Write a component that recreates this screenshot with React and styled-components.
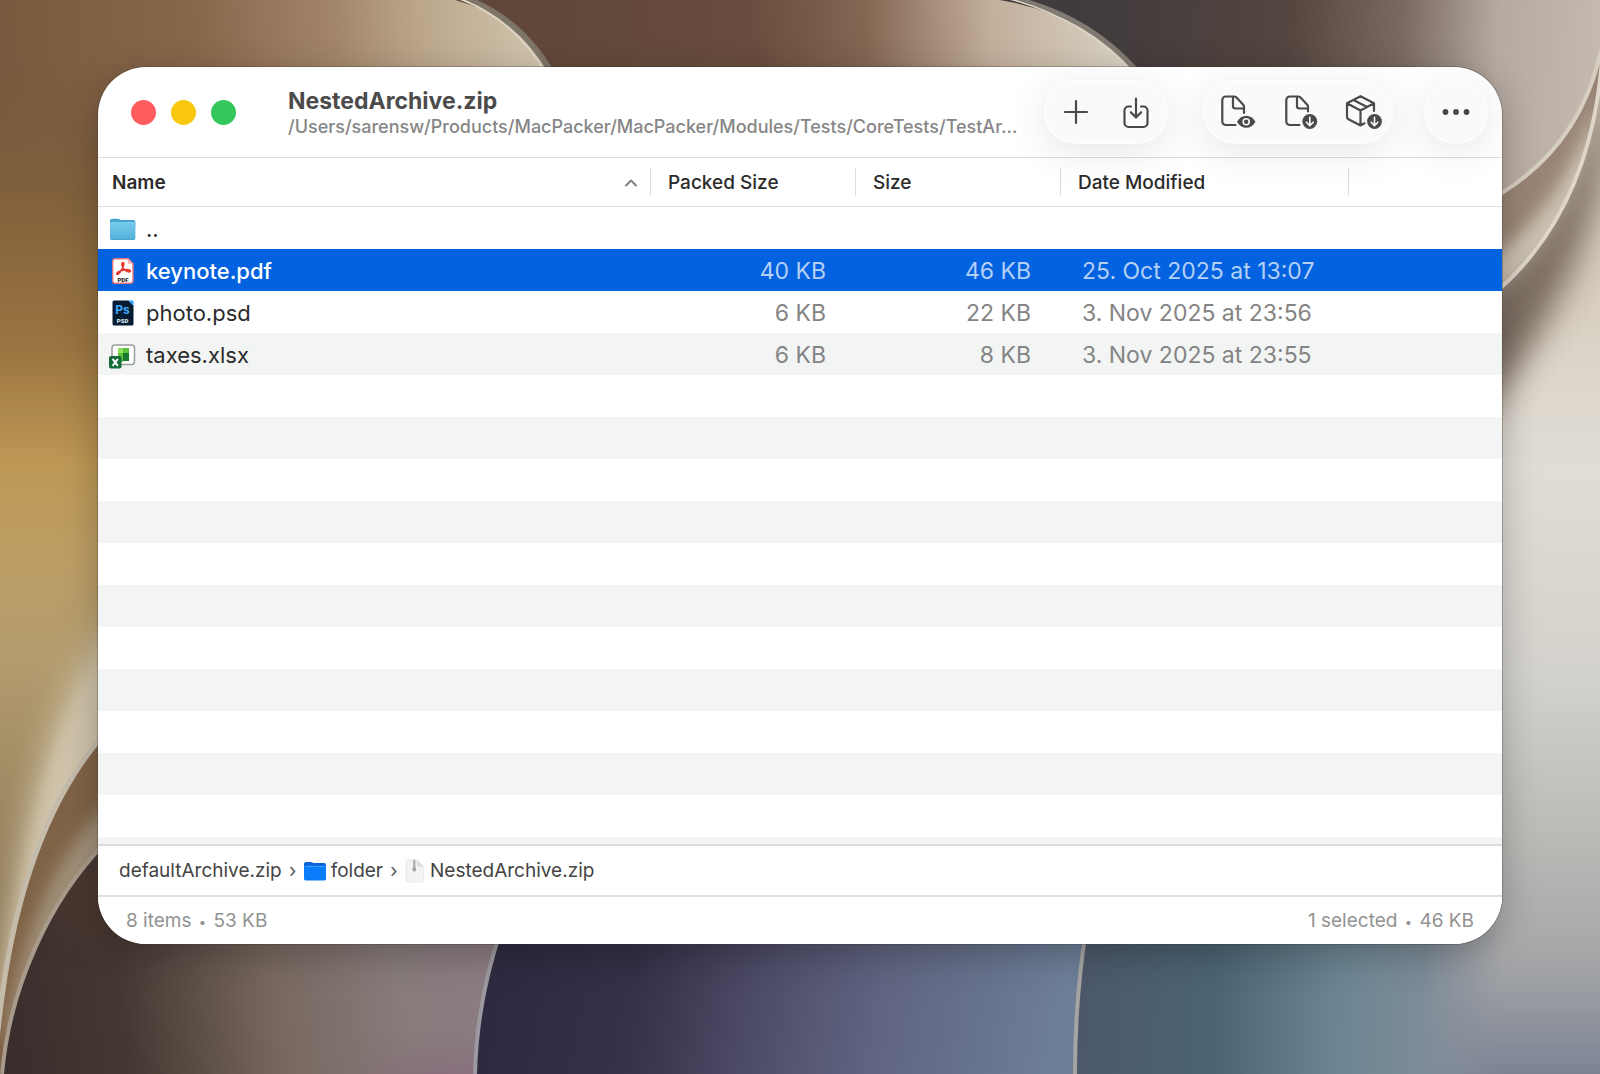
import React, { useState } from "react";
import styled, { createGlobalStyle } from "styled-components";

const GlobalStyle = createGlobalStyle`
  *, *::before, *::after { box-sizing: border-box; }
  body {
    margin: 0;
    background: #4a3f39;
    font-family: Inter, "Liberation Sans", sans-serif;
    -webkit-font-smoothing: antialiased;
  }
`;

const Desktop = styled.div`
  position: relative;
  display: flex;
  min-height: 100vh;
  padding: 67px 98px 130px;
  overflow: hidden;
`;

const WallpaperArt = styled.svg`
  position: absolute;
  inset: 0;
  width: 100%;
  height: 100%;
`;

const Window = styled.main`
  position: relative;
  display: flex;
  flex: 1;
  flex-direction: column;
  min-width: 0;
  overflow: hidden;
  border-radius: 48px;
  background: #fff;
`;

const WindowShadow = styled.div`
  position: relative;
  display: flex;
  flex: 1;
  min-width: 0;
  border-radius: 48px;
  box-shadow: 0 0 0 1px rgba(60, 54, 50, 0.3), 0 10px 36px rgba(0, 0, 0, 0.25);
`;

const TitleBar = styled.header`
  position: relative;
  z-index: 1;
  display: flex;
  align-items: center;
  height: 91px;
  padding: 0 14px 0 33px;
  border-bottom: 1px solid #dcdcdc;
`;

const TrafficLights = styled.div`
  display: flex;
  gap: 15px;
`;

const Light = styled.button`
  width: 25px;
  height: 25px;
  padding: 0;
  border: 0;
  border-radius: 50%;
  background: ${(p) => p.$color};
`;

const TitleBlock = styled.div`
  flex: 1;
  min-width: 0;
  margin: 0 17px 0 52px;
  padding-top: 4px;
`;

const Title = styled.h1`
  margin: 0;
  color: #4b4b4b;
  font-size: 23px;
  font-weight: 700;
  line-height: 26px;
`;

const FilePath = styled.p`
  margin: 0;
  overflow: hidden;
  color: #868686;
  font-size: 18px;
  font-weight: 500;
  line-height: 26px;
  white-space: nowrap;
`;

const ToolGroup = styled.div`
  display: flex;
  gap: ${(p) => p.$gap || 0}px;
  margin-left: ${(p) => p.$before || 0}px;
  padding: 2px;
  border-radius: 32px;
  background: #fafafa;
  box-shadow: inset 0 0 2px 1px #fff, 0 8px 40px rgba(0, 0, 0, 0.1);
`;

const ToolButton = styled.button`
  display: flex;
  align-items: center;
  justify-content: center;
  width: 60px;
  height: 60px;
  padding: 0;
  border: 0;
  border-radius: 50%;
  background: transparent;
  color: #4a4a4a;
`;

const LineIcon = styled.svg`
  flex: none;
  fill: none;
  stroke: ${(p) => p.$color || "currentColor"};
  stroke-width: 2.2;
  stroke-linecap: round;
  stroke-linejoin: round;
`;

const FileArea = styled.section`
  flex: 1;
  overflow: hidden;
`;

const Stripes = styled.div`
  height: 100%;
  background: repeating-linear-gradient(#fff 0 42px, #f3f5f4 42px 84px) 0 49px no-repeat;
`;

const FileTable = styled.table`
  width: 100%;
  border-spacing: 0;
  table-layout: fixed;
`;

const Column = styled.col`
  width: ${(p) => p.$width}px;
`;

const HeadCell = styled.th`
  height: 49px;
  padding: 0;
  border-bottom: 1px solid #dfdfdf;
`;

const SortButton = styled.button`
  display: flex;
  align-items: center;
  justify-content: space-between;
  width: 100%;
  height: 28px;
  padding: 2px 12px 0 ${(p) => (p.$lead ? 14 : 17)}px;
  border: 0;
  border-right: 1px solid #dcdcdc;
  background: transparent;
  color: #2b2b2b;
  font: ${(p) => (p.$lead ? 600 : 500)} 19px/26px Inter, "Liberation Sans", sans-serif;
`;

const Row = styled.tr`
  height: 42px;
  background: ${(p) => (p.$selected ? "#0262df" : "transparent")};
  color: ${(p) => (p.$selected ? "#b4d0f7" : "#848484")};
  font-size: 23px;
  line-height: 28px;
`;

const NameCell = styled.td`
  padding: 0 0 0 11px;
  color: ${(p) => (p.$selected ? "#fff" : "#2b2b2b")};
  font-size: 22px;
  font-weight: ${(p) => (p.$selected ? 500 : 400)};
`;

const FileName = styled.div`
  display: flex;
  align-items: center;
  gap: 9px;
  padding-top: 1px;
`;

const SizeCell = styled.td`
  padding: 2px 30px 0 0;
  text-align: right;
`;

const DateCell = styled.td`
  padding: 2px 0 0 21px;
  white-space: nowrap;
`;

const PathBar = styled.nav`
  height: 51px;
  padding: 0 21px;
  border-top: 2px solid #dbdbdb;
  background: #fff;
`;

const Crumbs = styled.ol`
  display: flex;
  align-items: center;
  height: 100%;
  margin: 0;
  padding: 0;
  list-style: none;
`;

const Crumb = styled.li`
  display: flex;
  align-items: center;
`;

const CrumbLink = styled.a`
  display: flex;
  align-items: center;
  gap: 5px;
  color: #444;
  font-size: 19px;
  line-height: 28px;
  text-decoration: none;
`;

const Divider = styled.span`
  width: 22px;
  color: #555;
  font-size: 19px;
  line-height: 28px;
  text-align: center;
`;

const StatusBar = styled.footer`
  display: flex;
  align-items: center;
  justify-content: space-between;
  height: 49px;
  padding: 2px 28px 0;
  border-top: 2px solid #e0e0e0;
  background: #fff;
  color: #929292;
  font-size: 19px;
  line-height: 28px;
`;

const Bullet = styled.span`
  margin: 0 2px;
  font-size: 13px;
`;

function Wallpaper() {
  return (
    <WallpaperArt viewBox="0 0 1600 1074" preserveAspectRatio="none" aria-hidden="true">
      <defs>
        <linearGradient id="lobeA" gradientUnits="userSpaceOnUse" x1="0" y1="40" x2="550" y2="0">
          <stop offset="0" stopColor="#795a3e" />
          <stop offset=".35" stopColor="#87674a" />
          <stop offset=".6" stopColor="#a1846a" />
          <stop offset=".76" stopColor="#bba68b" />
          <stop offset="1" stopColor="#d3c7b1" />
        </linearGradient>
        <linearGradient id="lobeB" gradientUnits="userSpaceOnUse" x1="500" y1="40" x2="1130" y2="0">
          <stop offset="0" stopColor="#5f4638" />
          <stop offset=".4" stopColor="#694d3e" />
          <stop offset=".58" stopColor="#836753" />
          <stop offset=".78" stopColor="#c3af9c" />
          <stop offset="1" stopColor="#d9d4c5" />
        </linearGradient>
        <linearGradient id="lobeC" gradientUnits="userSpaceOnUse" x1="1080" y1="40" x2="1600" y2="70">
          <stop offset="0" stopColor="#403b3d" />
          <stop offset=".4" stopColor="#54453f" />
          <stop offset=".62" stopColor="#7a6a62" />
          <stop offset=".8" stopColor="#b5aaa1" />
          <stop offset="1" stopColor="#c4bab0" />
        </linearGradient>
        <linearGradient id="left" gradientUnits="userSpaceOnUse" x1="0" y1="60" x2="0" y2="900">
          <stop offset="0" stopColor="#7a5a3e" stopOpacity="0" />
          <stop offset=".15" stopColor="#80603c" />
          <stop offset=".34" stopColor="#9a7440" />
          <stop offset=".48" stopColor="#bd9855" />
          <stop offset=".6" stopColor="#bd9e66" />
          <stop offset=".72" stopColor="#b29b6e" />
          <stop offset="1" stopColor="#8f7a58" />
        </linearGradient>
        <linearGradient id="right" gradientUnits="userSpaceOnUse" x1="0" y1="280" x2="0" y2="1074">
          <stop offset="0" stopColor="#d6ccbd" />
          <stop offset=".12" stopColor="#ddd6cb" />
          <stop offset=".24" stopColor="#e0ddd6" />
          <stop offset=".5" stopColor="#d3d1cb" />
          <stop offset=".7" stopColor="#bcbab7" />
          <stop offset=".85" stopColor="#a6a7a8" />
          <stop offset="1" stopColor="#7c8494" />
        </linearGradient>
        <linearGradient id="floor1" gradientUnits="userSpaceOnUse" x1="0" y1="1050" x2="500" y2="980">
          <stop offset="0" stopColor="#382d2c" />
          <stop offset=".25" stopColor="#443832" />
          <stop offset=".55" stopColor="#77685f" />
          <stop offset=".8" stopColor="#877b7b" />
          <stop offset="1" stopColor="#8b7c83" />
        </linearGradient>
        <linearGradient id="floor2" gradientUnits="userSpaceOnUse" x1="480" y1="980" x2="1080" y2="1080">
          <stop offset="0" stopColor="#2e2940" />
          <stop offset=".25" stopColor="#363048" />
          <stop offset=".48" stopColor="#504f6b" />
          <stop offset=".66" stopColor="#606581" />
          <stop offset=".95" stopColor="#6d7e97" />
        </linearGradient>
        <linearGradient id="floor3" gradientUnits="userSpaceOnUse" x1="1080" y1="990" x2="1600" y2="1010">
          <stop offset="0" stopColor="#4c586a" />
          <stop offset=".26" stopColor="#4b6473" />
          <stop offset=".5" stopColor="#6c8593" />
          <stop offset=".66" stopColor="#7d8c98" />
          <stop offset=".81" stopColor="#8b909c" stopOpacity="0" />
        </linearGradient>
        <filter id="soft" x="-50%" y="-50%" width="200%" height="200%">
          <feGaussianBlur stdDeviation="16" />
        </filter>
        <filter id="softer" x="-50%" y="-50%" width="200%" height="200%">
          <feGaussianBlur stdDeviation="8" />
        </filter>
        <clipPath id="floorClip">
          <path d="M0 1074C10 1000 50 900 104 842V700H500L500 944Q478 1000 474 1074Z" />
        </clipPath>
        <clipPath id="foldClip">
          <path d="M1490 297Q1590 215 1602 60V700H1490Z" />
        </clipPath>
        <clipPath id="midFoldClip">
          <path d="M1490 200Q1580 150 1601 50L1602 60Q1590 215 1490 297Z" />
        </clipPath>
        <clipPath id="ribbonClip">
          <path d="M104 736C50 800 12 900 0 1040V1074H104Z" />
        </clipPath>
        <clipPath id="outerRibbonClip">
          <path d="M0 500H104V736C50 800 12 900 0 1040Z" />
        </clipPath>
      </defs>

      {/* upper lobes, back to front */}
      <rect width="1600" height="400" fill="url(#lobeC)" />
      <path d="M450 0H1000Q1082 14 1136 67V200H450Z" fill="url(#lobeB)" />
      <path d="M1008 -3Q1086 14 1136 70" fill="none" stroke="#807a72" strokeWidth="5" />
      <path d="M1002 -3Q1080 16 1131 70" fill="none" stroke="#dcd7ca" strokeWidth="1.5" />
      <path d="M0 0H455Q520 18 553 70V300H0Z" fill="url(#lobeA)" />
      <path d="M462 -3Q520 18 551 72" fill="none" stroke="#7d7567" strokeWidth="6" />
      <path d="M455 -3Q514 18 545 72" fill="none" stroke="#ddd5c4" strokeWidth="2" />

      {/* left edge */}
      <rect y="60" width="140" height="1014" fill="url(#left)" />
      <g clipPath="url(#outerRibbonClip)">
        <path d="M130 600C70 660 20 780 0 1020L40 1010C60 880 80 790 130 740Z" fill="#cfc3a7" filter="url(#soft)" />
        <path d="M120 640C70 690 36 780 6 1000L30 1010C60 880 80 790 120 720Z" fill="#cfc3aa" filter="url(#softer)" />
      </g>
      <path d="M104 736C50 800 12 900 0 1040V1074H104Z" fill="#7f6347" />
      <g clipPath="url(#ribbonClip)">
        <path d="M112 800C60 850 25 920 4 1040L20 1030C45 930 70 890 112 850Z" fill="#a2917a" filter="url(#softer)" />
      </g>
      <path d="M104 734C50 796 12 890 -2 1030" fill="none" stroke="#c4bbab" strokeWidth="5" />

      {/* lower panels */}
      <path d="M0 1074C10 1000 50 900 104 842H540V1074Z" fill="url(#floor1)" />
      <g clipPath="url(#floorClip)">
        <ellipse cx="110" cy="900" rx="60" ry="40" fill="#51392d" opacity=".5" filter="url(#soft)" />
        <ellipse cx="450" cy="1080" rx="80" ry="24" fill="#87637a" opacity=".5" filter="url(#soft)" />
      </g>
      <path d="M104 844C50 900 10 985 2 1074" fill="none" stroke="#a89b8b" strokeWidth="4" />
      <path d="M502 930Q478 1000 476 1074H1120V930Z" fill="url(#floor2)" />
      <path d="M1490 297Q1590 215 1602 60V1074H1084V400H1490Z" fill="url(#right)" />
      <path d="M1086 930Q1075 1000 1075 1074H1600V930Z" fill="url(#floor3)" />
      <path d="M501 930Q477 1000 475 1074" fill="none" stroke="#9d99a0" strokeWidth="4" />
      <path d="M1086 930Q1075 1000 1075 1074" fill="none" stroke="#a6a4a2" strokeWidth="4" />

      {/* right edge folds */}
      <path d="M1490 200Q1580 150 1601 50L1602 60Q1590 215 1490 297Z" fill="#998575" />
      <g clipPath="url(#midFoldClip)">
        <path d="M1490 260Q1560 210 1598 100L1590 200Q1545 260 1490 300Z" fill="#cbc1b1" filter="url(#softer)" />
      </g>
      <g clipPath="url(#foldClip)">
        <path d="M1470 300Q1580 225 1604 60L1612 120Q1590 290 1470 430Z" fill="#6f6055" opacity=".9" filter="url(#soft)" />
      </g>
      <path d="M1490 200Q1580 150 1601 50" fill="none" stroke="#d6cec0" strokeWidth="4" />
      <path d="M1490 297Q1590 215 1602 60" fill="none" stroke="#ddd6c9" strokeWidth="4" />
    </WallpaperArt>
  );
}

const PlusIcon = () => (
  <LineIcon width="26" height="26" viewBox="0 0 26 26">
    <path d="M13 2v22M2 13h22" />
  </LineIcon>
);

const ImportIcon = () => (
  <LineIcon width="28" height="34" viewBox="0 -2 28 34">
    <path d="M9 9.5H6.5a4 4 0 0 0-4 4V26a4 4 0 0 0 4 4h15a4 4 0 0 0 4-4V13.5a4 4 0 0 0-4-4H19M14 1.500v18.800M8.800 15.200l5.200 5.200 5.200-5.200" />
  </LineIcon>
);

const ArrowBadge = ({ cx }) => (
  <>
    <circle cx={cx} cy="27.5" r="7.4" fill="currentColor" stroke="none" />
    <path d={`M${cx} 23.2v8M${cx - 3.4} 28.2l3.4 3.4 3.4-3.4`} stroke="#fafafa" strokeWidth="1.6" />
  </>
);

const PreviewIcon = () => (
  <LineIcon width="44" height="36" viewBox="0 0 44 36">
    <path d="M22.500 31H12.800a3.500 3.500 0 0 1-3.500-3.500V6a3.500 3.500 0 0 1 3.500-3.500H21c1 0 1.800.3 2.500 1l6.500 7c.7.8 1 1.500 1 2.500v6M20 3v9a2.500 2.500 0 0 0 2.500 2.500H31" />
    <path d="M24 27.700c4.500-8 14-8 18.500 0-4.500 8-14 8-18.500 0z" fill="currentColor" stroke="none" />
    <circle cx="33.200" cy="27.700" r="3" fill="none" stroke="#fafafa" strokeWidth="1.600" />
  </LineIcon>
);

const ExtractFileIcon = () => (
  <LineIcon width="40" height="36" viewBox="0 0 40 36">
    <path d="M21.500 31h-9.700a3.500 3.500 0 0 1-3.500-3.500V6a3.500 3.500 0 0 1 3.500-3.500H20c1 0 1.800.3 2.500 1l6.500 7c.7.8 1 1.500 1 2.500v4.500M19 3v9a2.500 2.500 0 0 0 2.500 2.500H30" />
    <ArrowBadge cx={31.8} />
  </LineIcon>
);

const ExtractAllIcon = () => (
  <LineIcon width="42" height="36" viewBox="-1 0 42 36">
    <path d="M23.500 29.300L19.500 31.500 7.500 25.300Q6 24.500 6 22.800V9.200L19.500 2.200 33 9.200V17M6 9.200L19.500 16.500 33 9.200M19.500 16.500V31M12.500 6L26 13" />
    <ArrowBadge cx={33.5} />
  </LineIcon>
);

const MoreIcon = () => (
  <svg width="28" height="8" viewBox="0 0 28 8" fill="currentColor">
    <circle cx="3.500" cy="4" r="2.900" />
    <circle cx="14" cy="4" r="2.900" />
    <circle cx="24.500" cy="4" r="2.900" />
  </svg>
);

const SortIcon = () => (
  <LineIcon $color="#808080" width="14" height="8" viewBox="0 0 14 8">
    <path d="M2 6.500L7 1.500l5 5" strokeWidth="2" />
  </LineIcon>
);

const SkyFolderIcon = () => (
  <svg width="28" height="28" viewBox="0 0 28 28">
    <defs>
      <linearGradient id="sky" x1="0" y1="0" x2="0" y2="1">
        <stop offset="0" stopColor="#79cbec" />
        <stop offset="1" stopColor="#51b0da" />
      </linearGradient>
    </defs>
    <path d="M1 6a2.200 2.200 0 0 1 2.200-2.200h5.600c1.600 0 2 1.200 3.400 1.200h12a2.200 2.200 0 0 1 2.200 2.200V12H1z" fill="#47a3cf" />
    <rect x="1" y="7" width="25.400" height="18" rx="2" fill="url(#sky)" />
    <path d="M2 24.500h23.400" stroke="#4aa3cc" strokeWidth="1" />
  </svg>
);

const PdfIcon = () => (
  <svg width="28" height="28" viewBox="0 0 28 28">
    <path d="M5.500 1.700H19l5 5V24a2.300 2.300 0 0 1-2.300 2.300H5.500A2.300 2.300 0 0 1 3.700 24V4a2.300 2.300 0 0 1 1.800-2.300z" fill="#fff" stroke="#e5737c" strokeWidth="1.400" />
    <path d="M19 1.700v5h5z" fill="#f5b5b8" />
    <path d="M14 5.500c-2.200 0-.8 5.500 2 7.700 2.500 2 5.800 2.300 5.300.5-.6-2-8.500-.8-11.600 1-2.600 1.500-2.300 3.300-.5 2.200 2.800-1.800 5.800-8 5.600-10.400-.1-.7-.4-1-.8-1z" fill="none" stroke="#e8372c" strokeWidth="1.700" />
    <text x="14" y="24.600" textAnchor="middle" fontFamily="Roboto, sans-serif" fontWeight="900" fontSize="6" fill="#222">PDF</text>
  </svg>
);

const PsdIcon = () => (
  <svg width="28" height="28" viewBox="0 0 28 28">
    <path d="M5 1.500h14.500l5 5V25a1.500 1.500 0 0 1-1.500 1.500H5A1.500 1.500 0 0 1 3.500 25V3A1.500 1.500 0 0 1 5 1.500z" fill="#061c33" />
    <path d="M19 1.500h4.500a1 1 0 0 1 1 1V7z" fill="#2f9df4" />
    <text x="13.500" y="15" textAnchor="middle" fontFamily="Inter, sans-serif" fontWeight="700" fontSize="12" fill="#42a8ff">Ps</text>
    <text x="13.500" y="23.500" textAnchor="middle" fontFamily="Roboto, sans-serif" fontWeight="900" fontSize="6" fill="#dfe9f2">PSD</text>
  </svg>
);

const XlsxIcon = () => (
  <svg width="28" height="28" viewBox="0 0 28 28">
    <rect x="3" y="4" width="22.500" height="19.500" rx="3" fill="#fff" stroke="#9a9f9c" strokeWidth="1.500" />
    <rect x="9" y="7" width="5" height="5" fill="#8fe05a" />
    <rect x="14" y="7" width="6" height="5" fill="#5cc13a" />
    <path d="M9 12h5v9H9z" fill="#5cc13a" />
    <path d="M14 12h6v8h-6z" fill="#177a2e" />
    <rect x="0" y="15" width="12.500" height="12.500" rx="2" fill="#136c3a" />
    <path d="M3.600 17.800l5.300 7M8.900 17.800l-5.300 7" stroke="#fff" strokeWidth="2" />
  </svg>
);

const BlueFolderIcon = () => (
  <svg width="22" height="22" viewBox="0 0 22 22">
    <path d="M0 4a2 2 0 0 1 2-2h5c1.300 0 1.600 1 2.800 1H20a2 2 0 0 1 2 2v7H0z" fill="#0a62d6" />
    <rect y="5.500" width="22" height="15" rx="1.800" fill="#0a7dfb" />
    <path d="M1 6.500h20" stroke="#3c9bff" strokeWidth="1" />
  </svg>
);

const ArchiveIcon = () => (
  <svg width="20" height="24" viewBox="0 0 20 24">
    <path d="M2.500.7h9.500l6.500 6.800V21.500a1.500 1.500 0 0 1-1.500 1.500H2.500A1.500 1.500 0 0 1 1 21.500V2.200A1.500 1.500 0 0 1 2.500.7z" fill="#f3f3f3" stroke="#e6e6e6" strokeWidth=".8" />
    <path d="M12 .7l6.500 6.800h-5A1.500 1.500 0 0 1 12 6z" fill="#dadada" />
    <rect x="8" y="1" width="2.500" height="8" fill="#b4b4b4" />
    <rect x="7.500" y="8" width="3.500" height="4.500" rx="1.500" fill="#a4a4a4" />
  </svg>
);

const files = [
  { name: "..", Icon: SkyFolderIcon, packed: "", size: "", date: "" },
  { name: "keynote.pdf", Icon: PdfIcon, packed: "40 KB", size: "46 KB", date: "25. Oct 2025 at 13:07" },
  { name: "photo.psd", Icon: PsdIcon, packed: "6 KB", size: "22 KB", date: "3. Nov 2025 at 23:56" },
  { name: "taxes.xlsx", Icon: XlsxIcon, packed: "6 KB", size: "8 KB", date: "3. Nov 2025 at 23:55" },
];

export default function App() {
  const [selected, setSelected] = useState("keynote.pdf");

  return (
    <>
      <GlobalStyle />
      <Desktop>
        <Wallpaper />
        <WindowShadow>
          <Window>
            <TitleBar>
              <TrafficLights>
                <Light $color="#fe5d60" aria-label="Close" />
                <Light $color="#f9c70d" aria-label="Minimize" />
                <Light $color="#34c759" aria-label="Zoom" />
              </TrafficLights>
              <TitleBlock>
                <Title>NestedArchive.zip</Title>
                <FilePath>/Users/sarensw/Products/MacPacker/MacPacker/Modules/Tests/CoreTests/TestAr...</FilePath>
              </TitleBlock>
              <ToolGroup>
                <ToolButton aria-label="Add"><PlusIcon /></ToolButton>
                <ToolButton aria-label="Save"><ImportIcon /></ToolButton>
              </ToolGroup>
              <ToolGroup $gap={3} $before={35}>
                <ToolButton aria-label="Preview"><PreviewIcon /></ToolButton>
                <ToolButton aria-label="Extract selected"><ExtractFileIcon /></ToolButton>
                <ToolButton aria-label="Extract archive"><ExtractAllIcon /></ToolButton>
              </ToolGroup>
              <ToolGroup $before={31}>
                <ToolButton aria-label="More"><MoreIcon /></ToolButton>
              </ToolGroup>
            </TitleBar>

            <FileArea>
              <Stripes>
                <FileTable>
                  <colgroup>
                    <col />
                    <Column $width={205} />
                    <Column $width={205} />
                    <Column $width={288} />
                    <Column $width={153} />
                  </colgroup>
                  <thead>
                    <tr>
                      <HeadCell scope="col" aria-sort="ascending">
                        <SortButton $lead>Name<SortIcon /></SortButton>
                      </HeadCell>
                      <HeadCell scope="col"><SortButton>Packed Size</SortButton></HeadCell>
                      <HeadCell scope="col"><SortButton>Size</SortButton></HeadCell>
                      <HeadCell scope="col"><SortButton>Date Modified</SortButton></HeadCell>
                      <HeadCell as="td" />
                    </tr>
                  </thead>
                  <tbody>
                    {files.map(({ name, Icon, packed, size, date }) => (
                      <Row key={name} $selected={name === selected} onClick={() => setSelected(name)}>
                        <NameCell $selected={name === selected}>
                          <FileName><Icon />{name}</FileName>
                        </NameCell>
                        <SizeCell>{packed}</SizeCell>
                        <SizeCell>{size}</SizeCell>
                        <DateCell>{date}</DateCell>
                        <td />
                      </Row>
                    ))}
                  </tbody>
                </FileTable>
              </Stripes>
            </FileArea>

            <PathBar aria-label="Archive path">
              <Crumbs>
                <Crumb>
                  <CrumbLink href="#root">defaultArchive.zip</CrumbLink>
                  <Divider>›</Divider>
                </Crumb>
                <Crumb>
                  <CrumbLink href="#folder"><BlueFolderIcon />folder</CrumbLink>
                  <Divider>›</Divider>
                </Crumb>
                <Crumb>
                  <CrumbLink href="#nested"><ArchiveIcon />NestedArchive.zip</CrumbLink>
                </Crumb>
              </Crumbs>
            </PathBar>
            <StatusBar>
              <span>8 items <Bullet>•</Bullet> 53 KB</span>
              <span>1 selected <Bullet>•</Bullet> 46 KB</span>
            </StatusBar>
          </Window>
        </WindowShadow>
      </Desktop>
    </>
  );
}
